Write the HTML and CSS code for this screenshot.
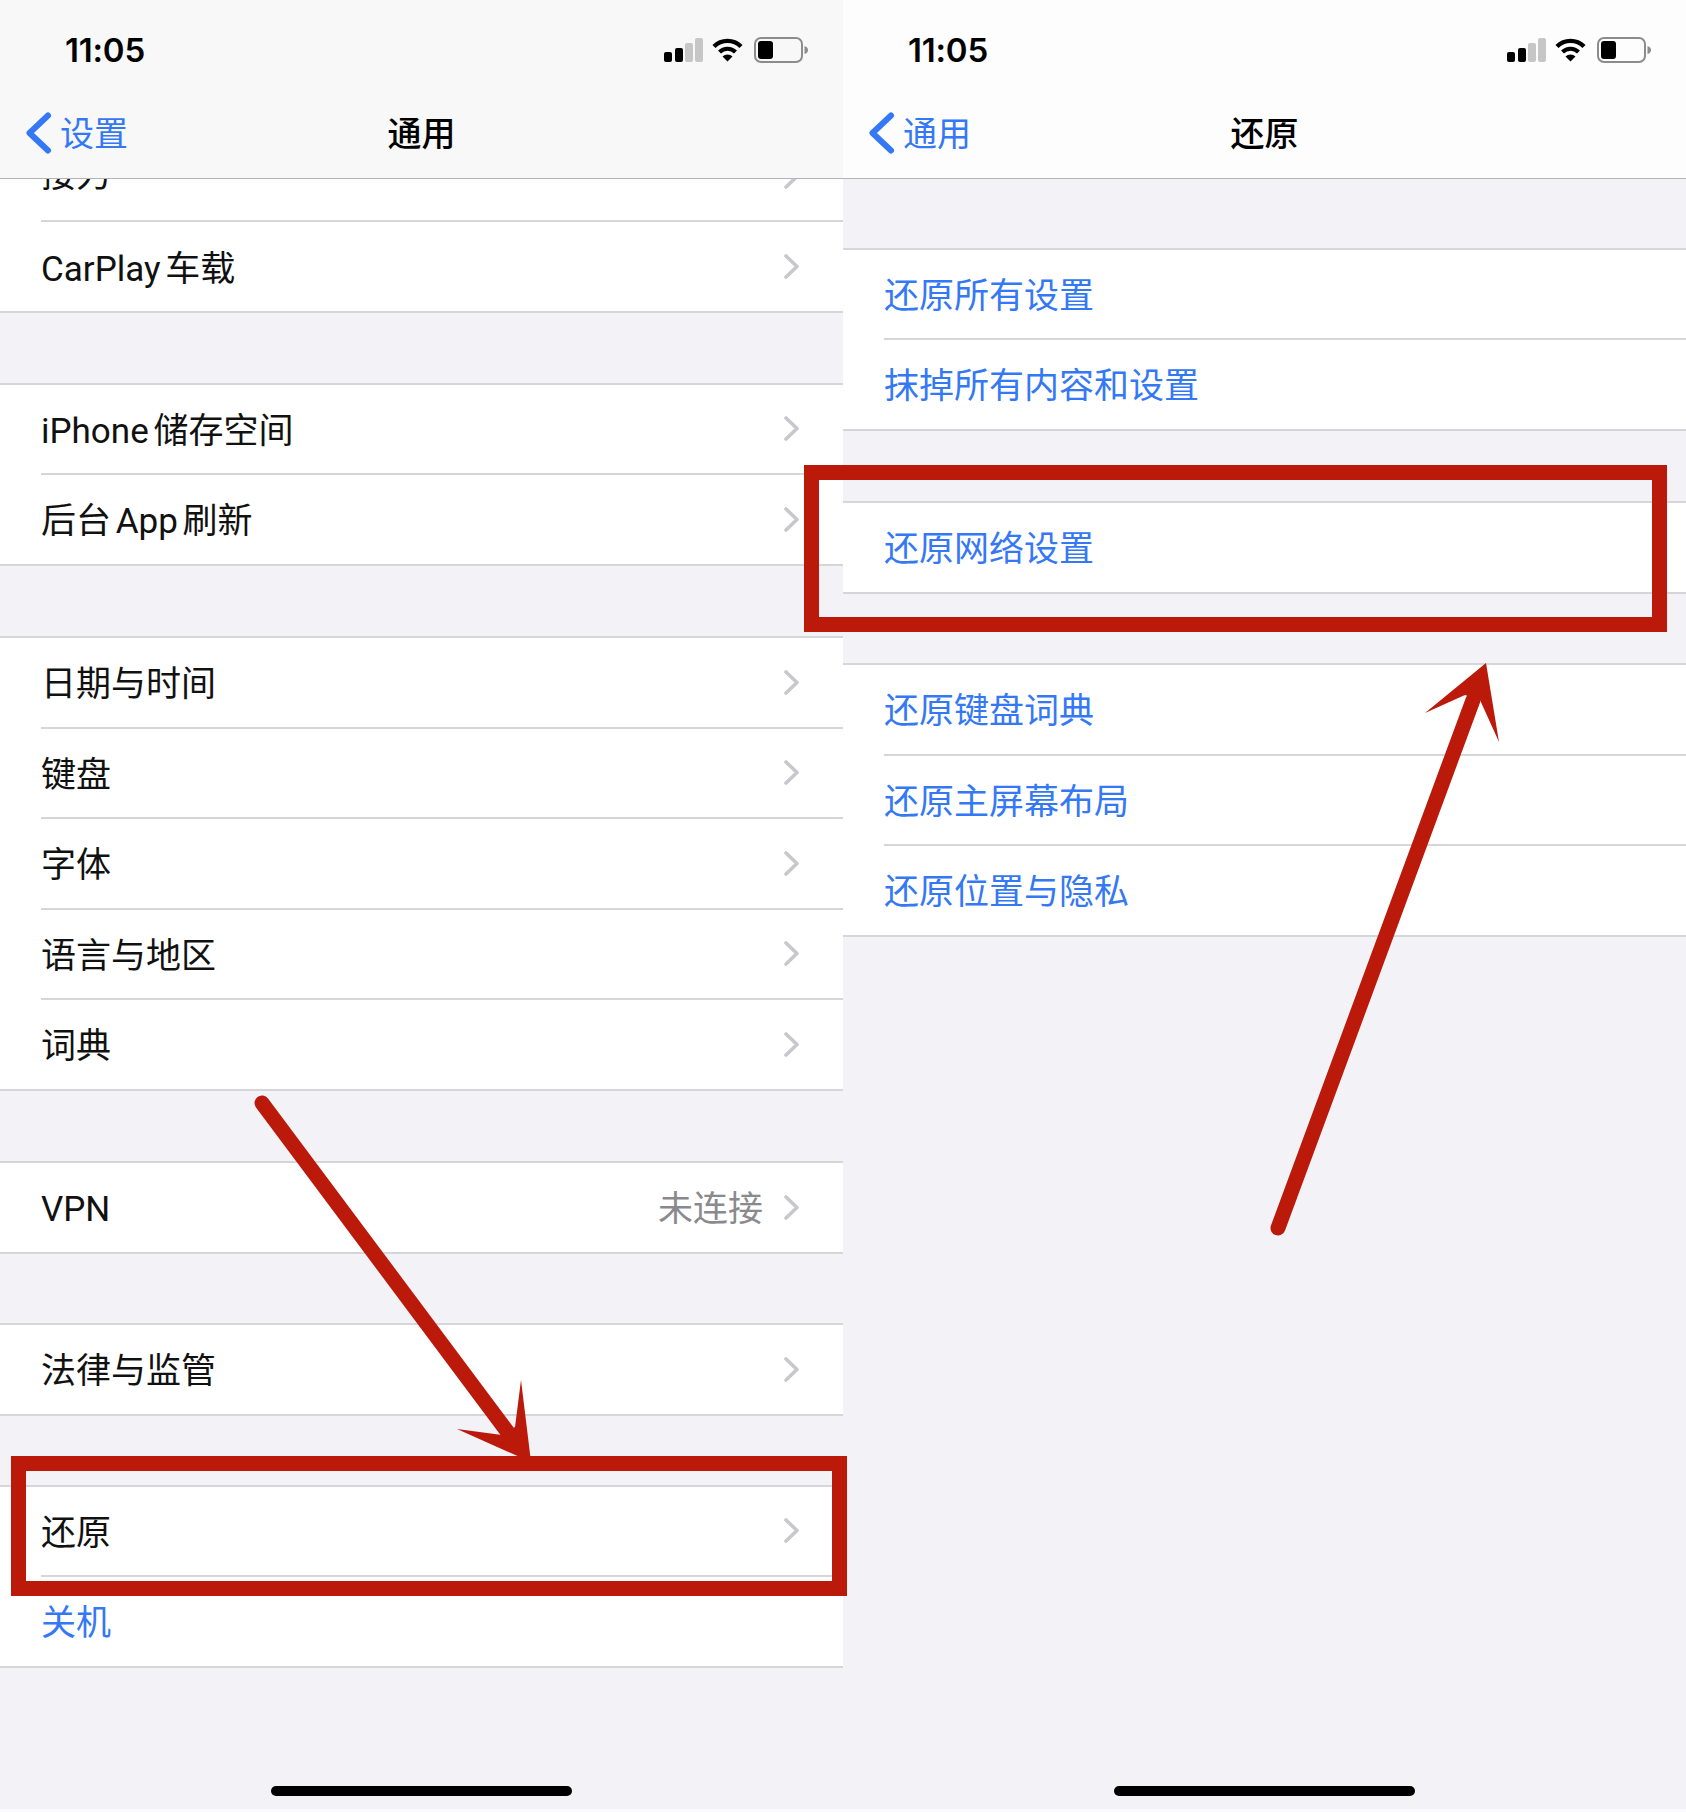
FILE: index.html
```html
<!DOCTYPE html>
<html lang="zh-CN">
<head>
<meta charset="utf-8">
<title>通用 / 还原</title>
<link rel="stylesheet" href="styles.css">
</head>
<body>
<svg class="defs" width="0" height="0" aria-hidden="true">
  <symbol id="chev" viewBox="0 0 15 25"><polyline points="2,2 13,12.5 2,23" fill="none" stroke="currentColor" stroke-width="3.6" stroke-linecap="round" stroke-linejoin="round"/></symbol>
  <symbol id="back" viewBox="0 0 27 42"><polyline points="23,3.500 4.500,21 23,38.500" fill="none" stroke="currentColor" stroke-width="6" stroke-linecap="round" stroke-linejoin="round"/></symbol>
  <symbol id="status" viewBox="0 0 146 26">
    <rect x="1" y="15" width="8" height="10" rx="2" fill="#000"/>
    <rect x="12" y="11" width="8" height="14" rx="2" fill="#000"/>
    <rect x="22" y="6" width="8" height="19" rx="2" fill="#c6c6c6"/>
    <rect x="32" y="1" width="8" height="24" rx="2" fill="#c6c6c6"/>
    <path d="M51 9.500 A19 19 0 0 1 78 9.500" fill="none" stroke="#000" stroke-width="4.400"/>
    <path d="M56.500 15 A11.500 11.500 0 0 1 72.500 15" fill="none" stroke="#000" stroke-width="4.200"/>
    <path d="M64.500 24.500 L59.500 19.500 A7 7 0 0 1 69.500 19.500 Z" fill="#000"/>
    <rect x="92" y="1" width="47" height="24" rx="6" fill="none" stroke="#8c8c8c" stroke-width="2"/>
    <rect x="95" y="4" width="15" height="18" rx="3" fill="#000"/>
    <path d="M141.500 9 Q145 10 145 13 Q145 16 141.500 17 Z" fill="#8c8c8c"/>
  </symbol>
</svg>

<main class="shell">
  <section class="phone">
    <header class="header">
      <div class="status">
        <span class="time">11:05</span>
        <svg class="status-icons"><use href="#status"/></svg>
      </div>
      <nav class="navbar">
        <a class="back"><svg class="back-icon"><use href="#back"/></svg><span class="back-text">设置</span></a>
        <h1 class="title">通用</h1>
      </nav>
    </header>

    <div class="group group-first">
      <div class="row row-clipped"><div class="cell"><span class="label">接力</span><svg class="chev"><use href="#chev"/></svg></div></div>
      <div class="row row-tall"><div class="cell"><span class="label">CarPlay 车载</span><svg class="chev"><use href="#chev"/></svg></div></div>
    </div>

    <div class="group">
      <div class="row"><div class="cell"><span class="label">iPhone 储存空间</span><svg class="chev"><use href="#chev"/></svg></div></div>
      <div class="row"><div class="cell"><span class="label">后台 App 刷新</span><svg class="chev"><use href="#chev"/></svg></div></div>
    </div>

    <div class="group group-wide">
      <div class="row"><div class="cell"><span class="label">日期与时间</span><svg class="chev"><use href="#chev"/></svg></div></div>
      <div class="row"><div class="cell"><span class="label">键盘</span><svg class="chev"><use href="#chev"/></svg></div></div>
      <div class="row"><div class="cell"><span class="label">字体</span><svg class="chev"><use href="#chev"/></svg></div></div>
      <div class="row"><div class="cell"><span class="label">语言与地区</span><svg class="chev"><use href="#chev"/></svg></div></div>
      <div class="row"><div class="cell"><span class="label">词典</span><svg class="chev"><use href="#chev"/></svg></div></div>
    </div>

    <div class="group group-wide">
      <div class="row"><div class="cell"><span class="label">VPN</span><span class="value">未连接</span><svg class="chev"><use href="#chev"/></svg></div></div>
    </div>

    <div class="group">
      <div class="row"><div class="cell"><span class="label">法律与监管</span><svg class="chev"><use href="#chev"/></svg></div></div>
    </div>

    <div class="group group-narrow">
      <div class="row"><div class="cell"><span class="label">还原</span><svg class="chev"><use href="#chev"/></svg></div></div>
      <div class="row"><div class="cell"><span class="label link">关机</span></div></div>
    </div>

    <div class="home-bar"></div>
  </section>

  <section class="phone phone-light">
    <header class="header">
      <div class="status">
        <span class="time">11:05</span>
        <svg class="status-icons"><use href="#status"/></svg>
      </div>
      <nav class="navbar">
        <a class="back"><svg class="back-icon"><use href="#back"/></svg><span class="back-text">通用</span></a>
        <h1 class="title">还原</h1>
      </nav>
    </header>

    <div class="group group-top">
      <div class="row"><div class="cell"><span class="label link">还原所有设置</span></div></div>
      <div class="row"><div class="cell"><span class="label link">抹掉所有内容和设置</span></div></div>
    </div>
    <div class="group group-wide">
      <div class="row"><div class="cell"><span class="label link">还原网络设置</span></div></div>
    </div>
    <div class="group">
      <div class="row"><div class="cell"><span class="label link">还原键盘词典</span></div></div>
      <div class="row"><div class="cell"><span class="label link">还原主屏幕布局</span></div></div>
      <div class="row"><div class="cell"><span class="label link">还原位置与隐私</span></div></div>
    </div>

    <div class="home-bar"></div>
  </section>
</main>

<svg class="annotations" viewBox="0 0 1686 1812" aria-hidden="true">
  <line class="arrow-shaft" x1="262" y1="1103" x2="518" y2="1446"/>
  <polygon class="arrow-head" points="531,1462 457,1429 502,1435 515,1427 521,1380"/>
  <line class="arrow-shaft" x1="1278" y1="1228" x2="1473" y2="700"/>
  <polygon class="arrow-head" points="1486,663 1425,713 1465,695 1480,700 1499,742"/>
  <rect class="highlight" x="18.500" y="1463.500" width="821" height="125"/>
  <rect class="highlight" x="811.500" y="472.500" width="848" height="152"/>
</svg>
</body>
</html>
```
FILE: styles.css
```css
* { box-sizing: border-box; }

html, body {
  margin: 0;
  padding: 0;
}

body {
  position: relative;
  width: 1686px;
  height: 1812px;
  overflow: hidden;
  background: #fafafc;
  font-family: "Roboto", "Noto Sans CJK SC", sans-serif;
  color: #000;
}

.defs { position: absolute; }

.shell {
  display: flex;
  height: 1809px;
}

.phone {
  display: flex;
  flex-direction: column;
  width: 843px;
  height: 100%;
  background: #f2f2f7;
}

.header {
  flex: none;
  height: 179px;
  background: #f8f8f8;
  border-bottom: 1px solid #b4b4b6;
}

.phone-light .header { background: #fdfdfd; }

.status {
  display: flex;
  align-items: center;
  justify-content: space-between;
  height: 100px;
  padding: 0 34px 0 65px;
}

.time {
  font-family: "Inter", sans-serif;
  font-size: 33px;
  font-weight: 600;
  letter-spacing: -0.2px;
}

.status-icons {
  width: 146px;
  height: 26px;
}

.navbar {
  display: grid;
  grid-template-columns: 1fr auto 1fr;
  align-items: center;
  height: 66px;
  padding-left: 25px;
}

.back {
  display: flex;
  align-items: center;
  gap: 8px;
  color: #3478f6;
  font-size: 34px;
}

.back-text { margin-bottom: 3px; }

.back-icon {
  width: 27px;
  height: 42px;
}

.title {
  margin: 0;
  font-size: 34px;
  font-weight: 500;
  line-height: 1.2;
  transform: translate(-12.500px, 0.500px);
}

.group {
  flex: none;
  margin-top: 69.500px;
  background: #fff;
  border-top: 2px solid #d6d6da;
}

.group-first {
  margin-top: 0;
  border-top: 0;
}

.group-wide { margin-top: 70.500px; }
.group-narrow { margin-top: 69px; }
.group-top { margin-top: 68.500px; }

.row {
  height: 90.500px;
  padding-left: 41px;
}

.row:last-child { padding-left: 0; }
.row:last-child .cell { padding-left: 41px; }

.row-tall { height: 91px; }

.row-clipped {
  height: 43px;
  overflow: hidden;
}

.row-clipped .cell {
  align-items: flex-end;
  padding-bottom: 19px;
}

.row-clipped .chev { margin-bottom: 12px; }
.row-clipped .label { padding-top: 0; }

.cell {
  display: flex;
  align-items: center;
  height: 100%;
  padding-right: 44px;
  border-bottom: 2px solid #d6d6da;
}

.label {
  flex: 1;
  padding-top: 6px;
  font-size: 35px;
  line-height: 50px;
  white-space: nowrap;
  word-spacing: -4px;
  color: #111;
}

.link { color: #3478f6; }

.value {
  padding-top: 6px;
  font-size: 35px;
  line-height: 50px;
  color: #8a8a8e;
  margin-right: 21px;
}

.chev {
  flex: none;
  width: 15px;
  height: 25px;
  color: #c7c7cc;
}

.home-bar {
  width: 301px;
  height: 10px;
  margin: auto auto 13px;
  border-radius: 5px;
  background: #000;
}

.annotations {
  position: absolute;
  left: 0;
  top: 0;
  width: 1686px;
  height: 1812px;
  pointer-events: none;
}

.arrow-shaft {
  stroke: #bb1a0b;
  stroke-width: 15;
  stroke-linecap: round;
}

.arrow-head { fill: #bb1a0b; }

.highlight {
  fill: none;
  stroke: #bb1a0b;
  stroke-width: 15;
}
```
